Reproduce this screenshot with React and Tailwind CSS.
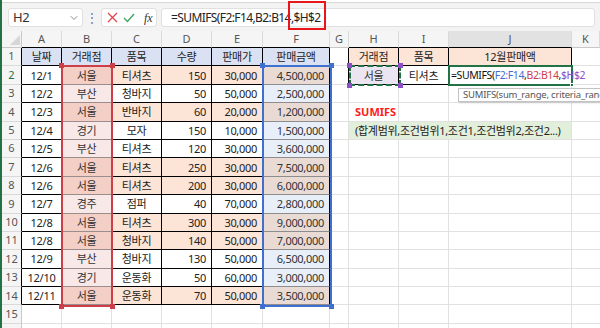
import React from 'react';
import { ChevronDown } from 'lucide-react';

const rows = [
  ['12/1', '서울', '티셔츠', '150', '30,000', '4,500,000'],
  ['12/2', '부산', '청바지', '50', '50,000', '2,500,000'],
  ['12/3', '서울', '반바지', '60', '20,000', '1,200,000'],
  ['12/4', '경기', '모자', '150', '10,000', '1,500,000'],
  ['12/5', '부산', '티셔츠', '120', '30,000', '3,600,000'],
  ['12/6', '서울', '티셔츠', '250', '30,000', '7,500,000'],
  ['12/6', '서울', '티셔츠', '200', '30,000', '6,000,000'],
  ['12/7', '경주', '점퍼', '40', '70,000', '2,800,000'],
  ['12/8', '서울', '티셔츠', '300', '30,000', '9,000,000'],
  ['12/8', '서울', '청바지', '140', '50,000', '7,000,000'],
  ['12/9', '부산', '청바지', '130', '50,000', '6,500,000'],
  ['12/10', '경기', '운동화', '50', '60,000', '3,000,000'],
  ['12/11', '서울', '운동화', '70', '50,000', '3,500,000'],
];

const letters = ['A', 'B', 'C', 'D', 'E', 'F', 'G', 'H', 'I', 'J', 'K'];

// corner handles of a reference range
function Handles({ color }) {
  return (
    <>
      <div className={'absolute -left-[4px] -top-[4px] w-[5px] h-[5px] ' + color} />
      <div className={'absolute -right-[4px] -top-[4px] w-[5px] h-[5px] ' + color} />
      <div className={'absolute -left-[4px] -bottom-[4px] w-[5px] h-[5px] ' + color} />
      <div className={'absolute -right-[4px] -bottom-[4px] w-[5px] h-[5px] ' + color} />
    </>
  );
}

function FormulaBar() {
  return (
    <div className="h-[31px] shrink-0 bg-[#f3f3f3] flex flex-col">
      <div className="h-[3px] bg-white border-b border-[#d6d6d6]" />
      <div className="flex items-center pt-[5px]">
        <div className="ml-[6px] w-[75px] h-[19px] bg-white rounded-[3px] border border-[#e0e0e0] flex items-center justify-between pl-[4px] pr-[2px]">
          <span className="text-[13px] text-[#333] leading-none tracking-[-0.3px]">H2</span>
          <ChevronDown size={12} strokeWidth={1.5} className="text-[#666]" />
        </div>
        <div className="w-[18px] text-center text-[12px] text-[#777] leading-none">⋮</div>
        <div className="w-[56px] h-[19px] bg-white rounded-[3px] border border-[#e0e0e0] flex items-center gap-[5px] pl-[5px]">
          <svg width="11" height="11" viewBox="0 0 11 11">
            <path d="M1 1 L10 10 M10 1 L1 10" stroke="#e0474c" strokeWidth="1.3" />
          </svg>
          <svg width="12" height="10" viewBox="0 0 12 10">
            <path d="M1 5 L4.5 8.5 L11 1" stroke="#3aa55b" strokeWidth="1.3" fill="none" />
          </svg>
          <span className="ml-[4px] text-[12px] italic text-[#333] font-['Liberation_Serif',serif] leading-none">fx</span>
        </div>
        <div className="ml-[4px] flex-1 mr-[5px] h-[19px] bg-white rounded-[3px] border border-[#e0e0e0] flex items-center pl-[9px]">
          <span className="text-[12px] tracking-[-0.6px] text-[#222] leading-none whitespace-nowrap">
            =SUMIFS(F2:F14,B2:B14
            <span className="relative">
              ,$H$2
              <span className="absolute -left-[3px] -right-[5px] -top-[8px] -bottom-[4px] border-2 border-[#e8161b]" />
            </span>
          </span>
        </div>
      </div>
    </div>
  );
}

function Sheet() {
  const cells = [];
  const txt = 'text-[11px] tracking-[-0.3px] leading-none whitespace-nowrap';

  // column header row
  cells.push(
    <div key="corner" className="relative bg-[#f5f5f5] border-r border-b border-[#c8c8c8]">
      <div className="absolute right-[1px] bottom-[2px] w-0 h-0 border-l-[10px] border-l-transparent border-b-[10px] border-b-[#d6d6d6]" />
    </div>
  );
  letters.forEach((l, i) => {
    const black = i <= 5 || (i >= 7 && i <= 9);
    let cls = 'flex items-center justify-center text-[11px] text-[#555] border-r border-r-[#dadada] border-b ';
    cls += l === 'J' ? 'bg-[#e2e2e2] ' : 'bg-[#f5f5f5] ';
    cls += black ? 'border-b-black' : 'border-b-[#c8c8c8]';
    cells.push(<div key={'h' + l} className={cls}>{l}</div>);
  });

  for (let r = 1; r <= 16; r++) {
    const inTable = r <= 14;
    cells.push(
      <div
        key={'r' + r}
        className={
          'flex items-center justify-center bg-[#f5f5f5] text-[11px] border-b border-b-[#dadada] border-r ' +
          (inTable ? 'border-r-black ' : 'border-r-[#c8c8c8] ') +
          (r === 2 ? 'text-[#217346]' : 'text-[#555]')
        }
      >
        {r <= 15 ? r : ''}
      </div>
    );

    // A - F
    if (r === 1) {
      ['날짜', '거래점', '품목', '수량', '판매가', '판매금액'].forEach((t, i) => (
        cells.push(
          <div key={'t1' + i} className={'flex items-center justify-center bg-[#d9e1f2] border-r border-b border-black ' + txt}>
            {t}
          </div>
        )
      ));
    } else if (inTable) {
      const d = rows[r - 2];
      const seoul = d[1] === '서울';
      cells.push(
        <div key={'a' + r} className={'flex items-center justify-center bg-white border-r border-b border-black ' + txt}>{d[0]}</div>
      );
      cells.push(
        <div
          key={'b' + r}
          className={
            'flex items-center justify-center border-r border-r-black border-b border-b-[#9b8d8d] text-[#333] ' +
            (seoul ? 'bg-[#f4cfc6] ' : 'bg-[#f9e8e8] ') + txt
          }
        >
          {d[1]}
        </div>
      );
      cells.push(
        <div key={'c' + r} className={'flex items-center justify-center border-r border-b border-black ' + (seoul ? 'bg-[#fce4d6] ' : 'bg-white ') + txt}>
          {d[2]}
        </div>
      );
      cells.push(
        <div key={'d' + r} className={'flex items-center justify-end pr-[5px] border-r border-b border-black ' + (seoul ? 'bg-[#fce4d6] ' : 'bg-white ') + txt}>
          {d[3]}
        </div>
      );
      cells.push(
        <div key={'e' + r} className={'flex items-center justify-end pr-[5px] border-r border-b border-black ' + (seoul ? 'bg-[#fce4d6] ' : 'bg-white ') + txt}>
          {d[4]}
        </div>
      );
      cells.push(
        <div
          key={'f' + r}
          className={
            'flex items-center justify-end pr-[5px] border-r border-r-black border-b border-b-[#8d8d8d] text-[#333] ' +
            (seoul ? 'bg-[#eadad4] ' : 'bg-[#e9eff8] ') + txt
          }
        >
          {d[5]}
        </div>
      );
    } else {
      for (let i = 0; i < 6; i++) {
        cells.push(<div key={'x' + r + i} className="border-r border-b border-[#e1e1e1]" />);
      }
    }

    // G
    cells.push(
      <div key={'g' + r} className={'border-b border-b-[#e1e1e1] border-r ' + (r <= 2 ? 'border-r-black' : 'border-r-[#e1e1e1]')} />
    );

    // H - J
    if (r === 1) {
      ['거래점', '품목', '12월판매액'].forEach((t, i) => (
        cells.push(
          <div key={'hj' + i} className={'flex items-center justify-center bg-[#fce4d6] border-r border-b border-black ' + txt}>
            {t}
          </div>
        )
      ));
    } else if (r === 2) {
      cells.push(<div key="h2" className={'flex items-center justify-center bg-[#ebe5f1] border-r border-b border-black text-[#333] ' + txt}>서울</div>);
      cells.push(<div key="i2" className={'flex items-center justify-center bg-white border-r border-b border-black ' + txt}>티셔츠</div>);
      cells.push(<div key="j2" className="bg-white border-r border-b border-black" />);
    } else if (r === 4) {
      cells.push(
        <div key="h4" className="flex items-center pl-[6px] border-r border-b border-[#e1e1e1] text-[11px] font-bold text-[#ff1a1a] leading-none">
          SUMIFS
        </div>
      );
      cells.push(<div key="i4" className="border-r border-b border-[#e1e1e1]" />);
      cells.push(<div key="j4" className="border-r border-b border-[#e1e1e1]" />);
    } else if (r === 5) {
      cells.push(
        <div key="h5" className={'col-span-3 flex items-center pl-[6px] bg-[#e2efda] border-r border-b border-[#e1e1e1] text-[#222] ' + txt}>
          (합계범위,조건범위1,조건1,조건범위2,조건2...)
        </div>
      );
    } else {
      for (let i = 0; i < 3; i++) {
        cells.push(<div key={'y' + r + i} className="border-r border-b border-[#e1e1e1]" />);
      }
    }

    // K
    cells.push(<div key={'k' + r} className="border-b border-[#e1e1e1]" />);
  }

  return (
    <div className="relative flex-1 overflow-hidden">
      <div className="grid grid-cols-[20px_40px_50px_50px_50px_51px_67px_19px_50px_50px_123px_1fr] grid-rows-[17px_repeat(16,18.4px)] text-[#222]">
        {cells}
      </div>

      {/* B2:B14 reference */}
      <div className="absolute left-[59px] top-[34.4px] w-[52px] h-[241.2px] border-2 border-[#cc3f48]">
        <Handles color="bg-[#cc3f48]" />
      </div>

      {/* F2:F14 reference */}
      <div className="absolute left-[260px] top-[34.4px] w-[70px] h-[241.2px] border-2 border-[#3f70d0]">
        <Handles color="bg-[#3f70d0]" />
      </div>

      {/* $H$2 reference */}
      <div className="absolute left-[347px] top-[34.4px] w-[52px] h-[20.4px] border-2 border-dashed border-[#217346]">
        <Handles color="bg-[#8a4fc4]" />
      </div>

      {/* active cell J2 in edit mode */}
      <div className="absolute left-[446px] top-[34.4px] w-[125px] h-[20.4px] border-2 border-[#217346] flex items-center pl-[1px]">
        <span className="text-[10.5px] tracking-[-0.4px] leading-none whitespace-nowrap text-[#111]">
          =SUMIFS(<span className="text-[#3f70d0]">F2:F14</span>,<span className="text-[#cc3f48]">B2:B14</span>,<span className="text-[#8a4fc4]">$H$2</span>
        </span>
        <div className="absolute -right-[3px] -bottom-[3px] w-[4px] h-[4px] bg-[#217346] border border-white" />
      </div>

      {/* function tooltip */}
      <div className="absolute left-[456px] top-[57px] w-[150px] h-[14px] bg-white border border-[#c3c3c3] shadow-[1px_1px_2px_rgba(0,0,0,0.15)] flex items-center pl-[4px] overflow-hidden">
        <span className="text-[9.5px] text-[#555] leading-none whitespace-nowrap tracking-[-0.2px]">SUMIFS(sum_range, criteria_range</span>
      </div>
    </div>
  );
}

export default function App() {
  return (
    <div className="w-[600px] h-[328px] overflow-hidden bg-white flex font-['Noto_Sans','Noto_Sans_CJK_KR',sans-serif] text-[#222]">
      <div className="w-[2px] shrink-0 bg-[#217346]" />
      <div className="flex-1 min-w-0 flex flex-col">
        <FormulaBar />
        <Sheet />
      </div>
    </div>
  );
}
